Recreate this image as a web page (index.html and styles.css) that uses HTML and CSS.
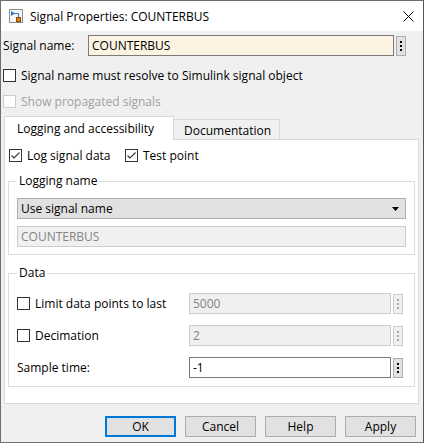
FILE: index.html
```html
<!DOCTYPE html>
<html lang="en">
<head>
  <meta charset="UTF-8">
  <title>Signal Properties: COUNTERBUS</title>
  <link rel="stylesheet" href="styles.css">
</head>
<body>
  <div class="window">
    <!-- Barra de título -->
    <div class="titlebar">
      <svg class="app-icon" width="14" height="14" viewBox="0 0 14 14">
        <rect x="0.5" y="0.5" width="13" height="13" fill="#f6f6f6" stroke="#8c8c8c"/>
        <path d="M2 4.5 H9.5 V8" fill="none" stroke="#2b78c8" stroke-width="1"/>
        <polygon points="2,2 6,4.5 2,7" fill="#2b78c8"/>
        <rect x="7.5" y="8.5" width="4" height="4" fill="#e8820c" stroke="#8a4800"/>
      </svg>
      <span class="title">Signal Properties: COUNTERBUS</span>
      <svg class="close" width="11" height="11" viewBox="0 0 11 11">
        <path d="M0.5 0.5 L10.5 10.5 M10.5 0.5 L0.5 10.5" stroke="#000" stroke-width="1"/>
      </svg>
    </div>

    <div class="content">
      <div class="name-row">
        <label class="name-label" for="signal-name">Signal name:</label>
        <input class="name-input" id="signal-name" type="text" value="COUNTERBUS">
        <button class="dots" type="button">
          <svg width="2" height="10" viewBox="0 0 2 10"><rect y="0" width="2" height="2"/><rect y="4" width="2" height="2"/><rect y="8" width="2" height="2"/></svg>
        </button>
      </div>

      <label class="check-row first">
        <span class="box"></span>
        Signal name must resolve to Simulink signal object
      </label>
      <label class="check-row disabled">
        <span class="box"></span>
        Show propagated signals
      </label>

      <!-- Pestañas -->
      <div class="tabs">
        <div class="tab active">Logging and accessibility</div>
        <div class="tab">Documentation</div>
      </div>

      <div class="panel">
        <div class="panel-checks">
          <label class="check log-check"><span class="box checked"></span>Log signal data</label>
          <label class="check"><span class="box checked"></span>Test point</label>
        </div>

        <fieldset class="group">
          <legend>Logging name</legend>
          <div class="select">
            <span>Use signal name</span>
            <svg width="7" height="4" viewBox="0 0 7 4"><polygon points="0,0 7,0 3.5,4" fill="#000"/></svg>
          </div>
          <div class="field disabled-field full">COUNTERBUS</div>
        </fieldset>

        <fieldset class="group data-group">
          <legend>Data</legend>
          <div class="data-row">
            <label class="check data-label"><span class="box"></span>Limit data points to last</label>
            <div class="field disabled-field">5000</div>
            <button class="dots off" type="button">
              <svg width="2" height="10" viewBox="0 0 2 10"><rect y="0" width="2" height="2"/><rect y="4" width="2" height="2"/><rect y="8" width="2" height="2"/></svg>
            </button>
          </div>
          <div class="data-row">
            <label class="check data-label"><span class="box"></span>Decimation</label>
            <div class="field disabled-field">2</div>
            <button class="dots off" type="button">
              <svg width="2" height="10" viewBox="0 0 2 10"><rect y="0" width="2" height="2"/><rect y="4" width="2" height="2"/><rect y="8" width="2" height="2"/></svg>
            </button>
          </div>
          <div class="data-row">
            <span class="data-label">Sample time:</span>
            <div class="field">-1</div>
            <button class="dots" type="button">
              <svg width="2" height="10" viewBox="0 0 2 10"><rect y="0" width="2" height="2"/><rect y="4" width="2" height="2"/><rect y="8" width="2" height="2"/></svg>
            </button>
          </div>
        </fieldset>
      </div>

      <!-- Botones -->
      <div class="buttons">
        <button class="btn default" type="button">OK</button>
        <button class="btn" type="button">Cancel</button>
        <button class="btn" type="button">Help</button>
        <button class="btn" type="button">Apply</button>
      </div>
    </div>
  </div>
</body>
</html>
```

FILE: styles.css
```css
body {
  margin: 0;
  font-family: "Open Sans", "Noto Sans", Arial, sans-serif;
  font-size: 12px;
  color: #000;
}

.window {
  width: 424px;
  height: 443px;
  box-sizing: border-box;
  border: 1px solid #6e6e6e;
  border-right-color: #555;
  background-color: #f0f0f0;
  display: flex;
  flex-direction: column;
}

.titlebar {
  height: 30px;
  flex: none;
  background-color: #fff;
  display: flex;
  align-items: center;
  padding: 0 9px 0 8px;
}

.title {
  margin-left: 7px;
  flex: 1;
}

.close {
  margin-top: 1px;
}

.content {
  flex: 1;
  padding: 4px 4px 0 2px;
  display: flex;
  flex-direction: column;
}

.name-row {
  display: flex;
  align-items: center;
  height: 21px;
}

.name-label {
  width: 85px;
}

.name-input {
  width: 306px;
  height: 21px;
  box-sizing: border-box;
  margin: 0;
  padding: 0 3px;
  border: 1px solid #7a7a7a;
  background-color: #fdf3e2;
  font-family: inherit;
  font-size: 12px;
  outline: none;
}

.dots {
  width: 10px;
  height: 20px;
  margin: 0 0 0 2px;
  padding: 0;
  box-sizing: border-box;
  border: 1px solid #adadad;
  background-color: #e1e1e1;
  display: flex;
  align-items: center;
  justify-content: center;
  fill: #000;
}

.dots.off {
  border-color: #cccccc;
  background-color: #f0f0f0;
  fill: #a8a8a8;
}

.check-row {
  height: 26px;
  display: flex;
  align-items: center;
}

.check-row.first {
  margin-top: 6px;
}

.check-row.disabled {
  color: #a0a0a0;
}

.box {
  width: 13px;
  height: 13px;
  box-sizing: border-box;
  border: 1px solid #333;
  background-color: #fff;
  margin-right: 5px;
  flex: none;
}

.disabled .box {
  border-color: #cccccc;
}

.box.checked {
  background: #fff url("data:image/svg+xml,%3Csvg xmlns='http://www.w3.org/2000/svg' width='11' height='11' viewBox='0 0 11 11'%3E%3Cpath d='M1.5 5.5 L4 8 L9.5 2.5' fill='none' stroke='%23333' stroke-width='1.1'/%3E%3C/svg%3E") no-repeat center;
}

.tabs {
  display: flex;
  margin-top: 3px;
  margin-left: 1px;
  height: 23px;
  align-items: flex-end;
  margin-bottom: -1px;
}

.tab {
  height: 21px;
  box-sizing: border-box;
  border: 1px solid #d9d9d9;
  border-bottom: none;
  background-color: #f0f0f0;
  padding-left: 10px;
  width: 107px;
  line-height: 21px;
  margin-left: -1px;
}

.tab.active {
  position: relative;
  z-index: 1;
  height: 24px;
  width: 170px;
  margin-left: 0;
  padding-left: 12px;
  background-color: #fff;
  line-height: 24px;
}

.panel {
  height: 265px;
  box-sizing: border-box;
  flex: none;
  border: 1px solid #d9d9d9;
  background-color: #fff;
  margin-left: 1px;
  padding: 0 3px;
}

.panel-checks {
  height: 30px;
  display: flex;
  align-items: center;
  padding-left: 1px;
}

.check {
  display: flex;
  align-items: center;
}

.log-check {
  width: 116px;
}

.group {
  margin: 3px 0 0 0;
  padding: 9px 8px 7px 8px;
  border: 1px solid #dcdcdc;
  min-width: 0;
}

.group legend {
  padding: 0 2px;
  line-height: 16px;
}

.select {
  height: 21px;
  box-sizing: border-box;
  border: 1px solid #adadad;
  background-color: #e1e1e1;
  display: flex;
  align-items: center;
  justify-content: space-between;
  padding: 0 6px 0 3px;
}

.field {
  width: 202px;
  height: 21px;
  box-sizing: border-box;
  border: 1px solid #7a7a7a;
  background-color: #fff;
  padding: 0 3px;
  line-height: 19px;
}

.disabled-field {
  border-color: #cccccc;
  background-color: #f0f0f0;
  color: #838383;
}

.field.full {
  width: auto;
  margin-top: 7px;
}

.data-group {
  margin-top: 10px;
  padding-top: 12px;
  padding-bottom: 8px;
}

.data-row {
  display: flex;
  align-items: center;
  height: 21px;
}

.data-row + .data-row {
  margin-top: 11px;
}

.data-label {
  width: 172px;
}

.buttons {
  display: flex;
  justify-content: flex-end;
  gap: 9px;
  margin-top: 12px;
  padding-right: 3px;
}

.btn {
  width: 71px;
  height: 21px;
  box-sizing: border-box;
  margin: 0;
  padding: 0;
  border: 1px solid #adadad;
  background-color: #e1e1e1;
  font-family: inherit;
  font-size: 12px;
  color: #000;
}

.btn.default {
  border: 2px solid #0078d7;
}
```
